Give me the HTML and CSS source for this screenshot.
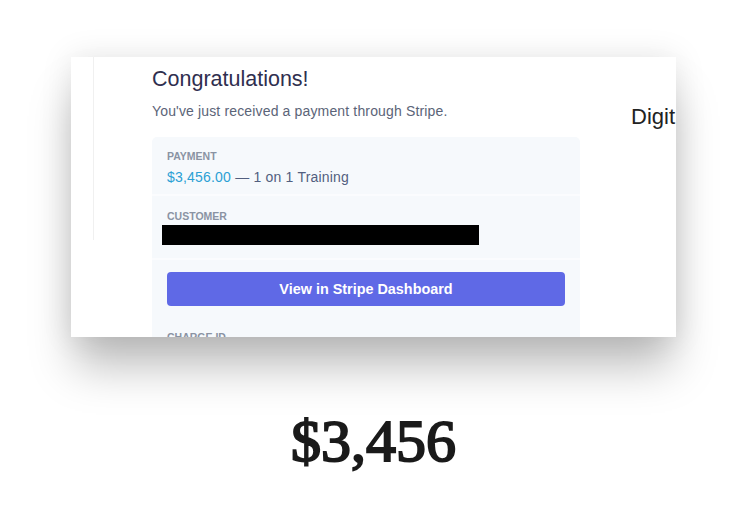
FILE: index.html
```html
<!DOCTYPE html>
<html>
<head>
<meta charset="utf-8">
<link rel="stylesheet" href="styles.css">
</head>
<body>
<div class="stage">
  <div class="shot">
    <div class="rail"></div>
    <div class="mail">
      <h1 class="title">Congratulations!</h1>
      <p class="lead">You've just received a payment through Stripe.</p>
      <div class="panel">
        <div class="row row-pay">
          <div class="label">Payment</div>
          <div class="value"><span class="amount">$3,456.00</span> — 1 on 1 Training</div>
        </div>
        <div class="row row-cust">
          <div class="label">Customer</div>
          <div class="redact"></div>
        </div>
        <div class="row row-btn">
          <div class="button">View in Stripe Dashboard</div>
        </div>
        <div class="row row-charge">
          <div class="label">Charge ID</div>
        </div>
      </div>
    </div>
    <div class="side">Digit</div>
  </div>
  <div class="big">$3,456</div>
</div>
</body>
</html>
```

FILE: styles.css
```css
html, body {
  margin: 0;
  padding: 0;
  background: #ffffff;
}
body {
  width: 745px;
  height: 526px;
  overflow: hidden;
  font-family: "Liberation Sans", Arial, sans-serif;
}
.stage {
  display: flex;
  flex-direction: column;
  align-items: flex-start;
  padding-top: 57px;
}
.shot {
  margin-left: 71px;
  width: 605px;
  height: 280px;
  background: #ffffff;
  overflow: hidden;
  display: flex;
  align-items: flex-start;
  box-shadow: 0 34px 42px -4px rgba(0,0,0,0.25), 0 0 30px rgba(0,0,0,0.1);
}
.rail {
  width: 22px;
  height: 183px;
  border-right: 1px solid #f0f0f0;
  flex: none;
}
.mail {
  margin-left: 58px;
  width: 428px;
  flex: none;
}
.title {
  margin: 10px 0 0 0;
  font-size: 21.5px;
  font-weight: normal;
  line-height: 25px;
  color: #2f2f4f;
}
.lead {
  margin: 10px 0 0 0;
  font-size: 14px;
  line-height: 18px;
  letter-spacing: 0.15px;
  color: #5b6478;
}
.panel {
  margin-top: 17px;
  background: #f6f9fc;
  border-radius: 5px;
  display: flex;
  flex-direction: column;
}
.row {
  padding: 0 15px;
  border-bottom: 2px solid #fbfcfe;
}
.row-pay {
  box-sizing: border-box;
  height: 59px;
  padding-top: 13px;
}
.label {
  font-size: 10.5px;
  font-weight: bold;
  text-transform: uppercase;
  color: #8a93a3;
  line-height: 12px;
}
.value {
  margin-top: 7px;
  font-size: 14px;
  line-height: 17px;
  letter-spacing: 0.2px;
  color: #525f7f;
}
.amount {
  color: #2ba0d4;
}
.row-cust {
  box-sizing: border-box;
  height: 64px;
  padding-top: 14px;
}
.redact {
  margin-top: 3px;
  margin-left: -5px;
  width: 317px;
  height: 20px;
  background: #000000;
}
.row-btn {
  box-sizing: border-box;
  height: 58px;
  padding-top: 12px;
  border-bottom: none;
}
.button {
  height: 34px;
  background: #5f69e6;
  border-radius: 4px;
  color: #ffffff;
  font-size: 14.4px;
  font-weight: bold;
  line-height: 34px;
  text-align: center;
}
.row-charge {
  padding-top: 13px;
  border-bottom: none;
}
.side {
  margin-left: 51px;
  margin-top: 47px;
  font-size: 22px;
  line-height: 26px;
  color: #222222;
  white-space: nowrap;
  flex: none;
}
.big {
  align-self: center;
  margin-top: 74px;
  margin-left: 2px;
  font-family: "Liberation Serif", "Times New Roman", serif;
  font-size: 60px;
  line-height: 60px;
  font-weight: normal;
  -webkit-text-stroke: 2px #1a1a1a;
  color: #1a1a1a;
}
```
